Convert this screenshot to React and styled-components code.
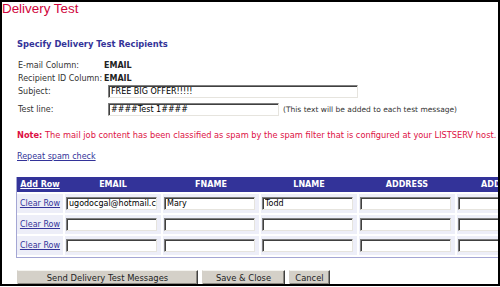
import React from "react";
import styled, { createGlobalStyle } from "styled-components";

const Global = createGlobalStyle`
  html, body { margin: 0; padding: 0; background: #fff; overflow: hidden; }
  body { font-family: "DejaVu Sans", Verdana, sans-serif; font-size: 8px; color: #222; }
`;

const Frame = styled.div`
  position: relative;
  width: 500px;
  height: 286px;
  box-sizing: border-box;
  border: 2px solid #000;
  overflow: hidden;
`;

const Title = styled.div`
  position: absolute;
  top: -2px;
  left: -2px;
  padding: 1px 6px 5px 2px;
  background: #fff;
  font-family: "Liberation Sans", Arial, sans-serif;
  font-size: 13.4px;
  line-height: 16px;
  color: #d0043c;
`;

const Content = styled.div`
  display: flex;
  flex-direction: column;
  align-items: flex-start;
  padding: 37px 0 0 15px;
`;

const Heading = styled.div`
  font-weight: bold;
  font-size: 8.35px;
  line-height: 10px;
  color: #333399;
`;

const InfoRow = styled.div`
  display: flex;
  align-items: center;
  margin-top: ${(p) => p.$mt}px;
  padding-left: 1px;
  height: ${(p) => p.$h || 10}px;
  color: #333;
`;

const Label = styled.span`
  width: 86px;
  flex: none;
  color: #333;
`;

const Value = styled.span`
  font-weight: bold;
  color: #222;
`;

const TextBox = styled.input`
  box-sizing: border-box;
  width: ${(p) => p.$w}px;
  height: 13px;
  margin: 0 0 0 ${(p) => p.$ml || 0}px;
  padding: 0 0 0 2px;
  font-family: "DejaVu Sans", Verdana, sans-serif;
  font-size: 8px;
  color: #000;
  background: #fff;
  border-style: solid;
  border-width: 1px;
  border-color: #7f7f7f #e6e4de #e6e4de #7f7f7f;
  box-shadow: inset 1px 1px 0 #404040;
  outline: none;
`;

const Hint = styled.span`
  margin-left: 4px;
  font-size: 7.5px;
  color: #333;
`;

const Note = styled.div`
  margin-top: 14px;
  line-height: 10px;
  font-size: 8.25px;
  color: #dd1144;
  white-space: nowrap;
  b { font-weight: bold; }
`;

const Link = styled.a`
  color: ${(p) => (p.$light ? "#fff" : "#333399")};
  font-weight: ${(p) => (p.$bold ? "bold" : "normal")};
  text-decoration: underline;
  cursor: pointer;
`;

const LinkLine = styled.div`
  margin-top: 12px;
  line-height: 10px;
`;

const Table = styled.div`
  margin: 15px 0 0 -1px;
  border-left: 1px solid #a4a6d4;
  border-bottom: 1px solid #a4a6d4;
  padding-bottom: 2px;
  background: #fff;
`;

const cols = "46px repeat(5, 96px)";

const HeaderRow = styled.div`
  display: grid;
  grid-template-columns: ${cols};
  column-gap: 2px;
  height: 15px;
  background: #333399;
  align-items: center;
`;

const HeadCell = styled.div`
  text-align: center;
  color: #fff;
  font-weight: bold;
  white-space: nowrap;
  overflow: hidden;
`;

const DataRow = styled.div`
  display: grid;
  grid-template-columns: ${cols};
  column-gap: 2px;
  margin-top: 2px;
  height: 19px;
`;

const Cell = styled.div`
  background: #edeef8;
  display: flex;
  align-items: center;
  justify-content: ${(p) => (p.$center ? "center" : "flex-start")};
  padding-left: ${(p) => (p.$center ? 0 : 1)}px;
`;

const Buttons = styled.div`
  display: flex;
  gap: 4px;
  margin-top: 12px;
`;

const Button = styled.button`
  box-sizing: border-box;
  width: ${(p) => p.$w}px;
  height: 15px;
  margin: 0;
  padding: 0;
  font-family: "DejaVu Sans", Verdana, sans-serif;
  font-size: 8.4px;
  color: #222;
  background: #d4d0c8;
  border-style: solid;
  border-width: 1px;
  border-color: #f4f3ef #404040 #404040 #d4d0c8;
  box-shadow: inset -1px -1px 0 #8a8780;
`;

const rows = [
  { email: "ugodocgal@hotmail.com", fname: "Mary", lname: "Todd" },
  { email: "", fname: "", lname: "" },
  { email: "", fname: "", lname: "" },
];

export default function App() {
  return (
    <>
      <Global />
      <Frame>
        <Title>Delivery Test</Title>
        <Content>
          <Heading>Specify Delivery Test Recipients</Heading>
          <InfoRow $mt={11}>
            <Label>E-mail Column:</Label>
            <Value>EMAIL</Value>
          </InfoRow>
          <InfoRow $mt={3}>
            <Label>Recipient ID Column:</Label>
            <Value>EMAIL</Value>
          </InfoRow>
          <InfoRow $mt={2} $h={13}>
            <Label>Subject:</Label>
            <TextBox $w={250} $ml={4} defaultValue="FREE BIG OFFER!!!!!" />
          </InfoRow>
          <InfoRow $mt={5} $h={13}>
            <Label>Test line:</Label>
            <TextBox $w={171} $ml={4} defaultValue="####Test 1####" />
            <Hint>(This text will be added to each test message)</Hint>
          </InfoRow>
          <Note>
            <b>Note:</b> The mail job content has been classified as spam by the spam filter that is configured at your LISTSERV host.
          </Note>
          <LinkLine>
            <Link>Repeat spam check</Link>
          </LinkLine>
          <Table>
            <HeaderRow>
              <HeadCell>
                <Link $light $bold>Add Row</Link>
              </HeadCell>
              <HeadCell>EMAIL</HeadCell>
              <HeadCell>FNAME</HeadCell>
              <HeadCell>LNAME</HeadCell>
              <HeadCell>ADDRESS</HeadCell>
              <HeadCell>ADDRESS2</HeadCell>
            </HeaderRow>
            {rows.map((r, i) => (
              <DataRow key={i}>
                <Cell $center>
                  <Link>Clear Row</Link>
                </Cell>
                <Cell><TextBox $w={91} defaultValue={r.email} /></Cell>
                <Cell><TextBox $w={91} defaultValue={r.fname} /></Cell>
                <Cell><TextBox $w={91} defaultValue={r.lname} /></Cell>
                <Cell><TextBox $w={91} defaultValue="" /></Cell>
                <Cell><TextBox $w={91} defaultValue="" /></Cell>
              </DataRow>
            ))}
          </Table>
          <Buttons>
            <Button $w={181}>Send Delivery Test Messages</Button>
            <Button $w={83}>Save &amp; Close</Button>
            <Button $w={41}>Cancel</Button>
          </Buttons>
        </Content>
      </Frame>
    </>
  );
}
